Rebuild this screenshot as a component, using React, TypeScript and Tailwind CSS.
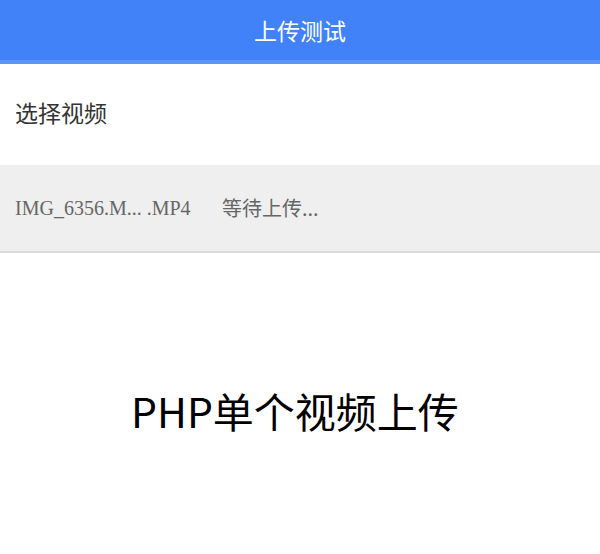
export default function App() {
  return (
    <div className="flex h-[554px] w-[600px] flex-col bg-white font-['Noto_Sans_CJK_SC',sans-serif]">
      <header className="flex h-[64px] items-center justify-center border-b-[4px] border-[#5c95f8] bg-[#4282f8]">
        <h1 className="text-[23px] leading-none text-white">上传测试</h1>
      </header>

      <div className="flex h-[101px] items-center px-[15px] pb-[4px]">
        <span className="text-[23px] leading-none text-[#333]">选择视频</span>
      </div>

      <div className="flex h-[88px] items-center border-b-[2px] border-[#dcdcdc] bg-[#efefef] px-[15px] text-[20px] text-[#666]">
        <span className="w-[207px] font-['Liberation_Serif','Noto_Sans_CJK_SC',serif]">
          IMG_6356.M... .MP4
        </span>
        <span>等待上传...</span>
      </div>

      <div className="flex flex-1 items-center justify-center pt-[13px] pr-[10px]">
        <p className="text-[41px] leading-none text-black">PHP单个视频上传</p>
      </div>
    </div>
  );
}
